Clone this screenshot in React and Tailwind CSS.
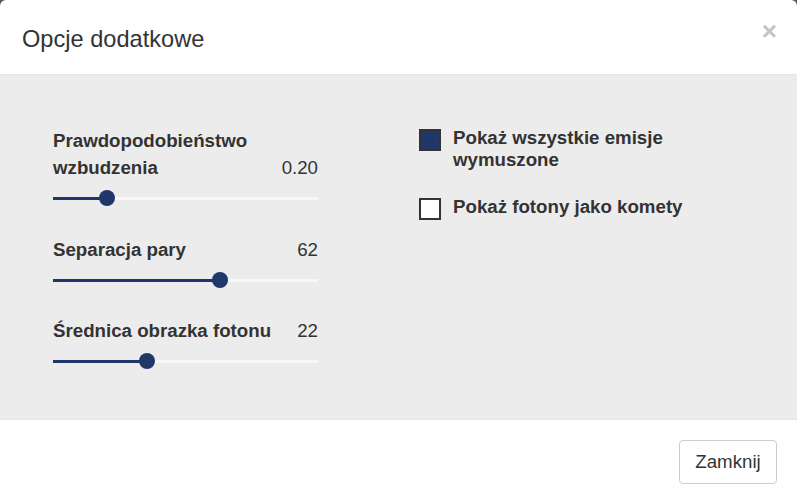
import React from "react";

const font = { fontFamily: '"Liberation Sans", Arial, sans-serif' };

function Slider({ pct }) {
  return (
    <div className="relative h-[34px] w-full">
      <div className="absolute left-0 right-0 top-[16px] h-[3px] bg-[#f7f7f7]" />
      <div className="absolute left-0 top-[16px] h-[3px] bg-[#1f3769]" style={{ width: `${pct}%` }} />
      <div
        className="absolute top-[9px] h-[16px] w-[16px] -ml-[8px] rounded-full bg-[#1f3769]"
        style={{ left: `${pct}%` }}
      />
    </div>
  );
}

function Group({ label, value, pct, className = "" }) {
  return (
    <div className={className}>
      <div className="flex items-end justify-between leading-[27px]">
        <div className="font-bold text-[#333] max-w-[230px]">{label}</div>
        <div className="text-[#333]">{value}</div>
      </div>
      <Slider pct={pct} />
    </div>
  );
}

function Check({ checked, children, className = "" }) {
  return (
    <div className={`flex items-start gap-[12px] ${className}`}>
      <div
        className={`mt-[2px] h-[22px] w-[22px] shrink-0 border-2 border-[#333] ${
          checked ? "bg-[#1f3769]" : "bg-white"
        }`}
      />
      <div className="font-bold text-[#333] leading-[22px]">{children}</div>
    </div>
  );
}

export default function App() {
  return (
    <div className="h-[501px] w-[797px] overflow-hidden bg-[#5a5a5a]" style={font}>
      <div className="h-full rounded-t-[6px] bg-white text-[18.7px]">
        <div className="flex h-[75px] items-start justify-between border-b border-[#e5e5e5] pl-[22px] pr-[20px]">
          <div className="mt-[24px] text-[23.6px] leading-[30px] text-[#333]">Opcje dodatkowe</div>
          <div className="mt-[16px] text-[26px] font-bold leading-[30px] text-[#c4c4c4]">×</div>
        </div>
        <div className="flex h-[344px] bg-[#ececec] pt-[52px]">
          <div className="ml-[53px] w-[265px]">
            <Group label="Prawdopodobieństwo wzbudzenia" value="0.20" pct={20.4} />
            <Group label="Separacja pary" value="62" pct={63} className="mt-[21px]" />
            <Group label="Średnica obrazka fotonu" value="22" pct={35.5} className="mt-[20px]" />
          </div>
          <div className="ml-[101px]">
            <Check checked>
              Pokaż wszystkie emisje
              <br />
              wymuszone
            </Check>
            <Check className="mt-[25px]">Pokaż fotony jako komety</Check>
          </div>
        </div>
        <div className="flex justify-end border-t border-[#e5e5e5] pr-[20px] pt-[20px]">
          <button className="h-[44px] w-[98px] rounded-[4px] border border-[#cccccc] bg-white text-[18.7px] text-[#333]">
            Zamknij
          </button>
        </div>
      </div>
    </div>
  );
}
